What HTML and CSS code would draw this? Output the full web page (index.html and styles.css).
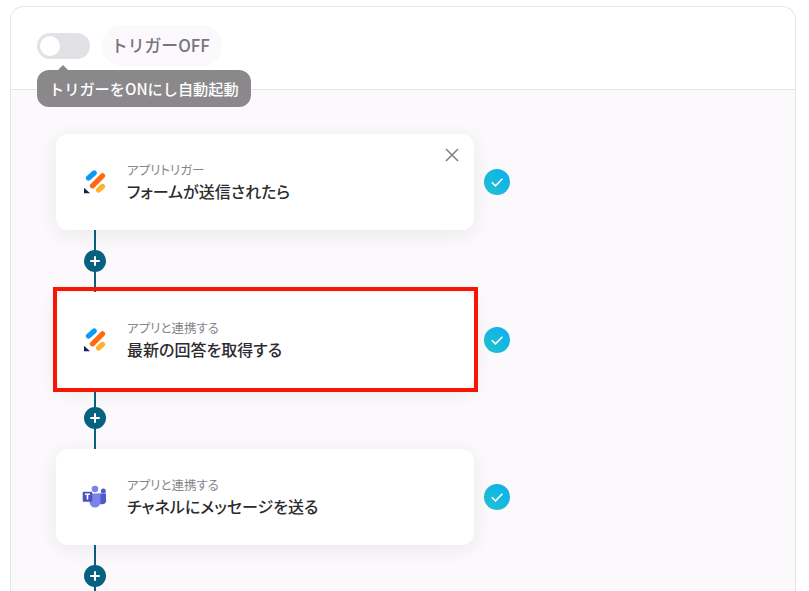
FILE: index.html
```html
<!DOCTYPE html>
<html lang="ja">

<head>
    <meta charset="utf-8">
    <title>フローボット</title>
    <link rel="stylesheet" href="styles.css">
</head>

<body>
    <svg class="defs" width="0" height="0">
        <symbol id="jotform" viewBox="0 0 24 24">
            <path class="jf-blue" d="M6.5 8 L12.2 3"/>
            <path class="jf-orange" d="M10.5 15.8 L20.5 5.8"/>
            <path class="jf-yellow" d="M16.5 20 L20.5 16.5"/>
            <path class="jf-dark" d="M2 17.7 V23.3 H8 Z"/>
        </symbol>
        <symbol id="check" viewBox="0 0 26 26">
            <path class="check-mark" d="M7.8 13.2 L11.5 16.8 L18.4 9.8"/>
        </symbol>
        <linearGradient id="check-bg" x1="0" y1="1" x2="1" y2="0">
            <stop offset="0" stop-color="#23c3cc"/>
            <stop offset="1" stop-color="#0aaef2"/>
        </linearGradient>
    </svg>

    <div class="panel">
        <div class="panel-head">
            <div class="toggle"><span class="knob"></span></div>
            <div class="status">トリガーOFF</div>
            <div class="tooltip">トリガーをONにし自動起動</div>
        </div>

        <div class="flow">
            <div class="step">
                <div class="card">
                    <svg class="app-icon" width="24" height="24"><use href="#jotform"/></svg>
                    <div class="card-text">
                        <div class="card-label">アプリトリガー</div>
                        <div class="card-title">フォームが送信されたら</div>
                    </div>
                    <svg class="close" width="16" height="16" viewBox="0 0 16 16"><path d="M2 2 L14 14 M14 2 L2 14"/></svg>
                </div>
                <svg class="check" width="26" height="26" viewBox="0 0 26 26"><circle cx="13" cy="13" r="13" fill="url(#check-bg)"/><use href="#check"/></svg>
            </div>
            <div class="connector"><span class="plus"></span></div>

            <div class="step">
                <div class="card">
                    <svg class="app-icon" width="24" height="24"><use href="#jotform"/></svg>
                    <div class="card-text">
                        <div class="card-label">アプリと連携する</div>
                        <div class="card-title">最新の回答を取得する</div>
                    </div>
                </div>
                <svg class="check" width="26" height="26" viewBox="0 0 26 26"><circle cx="13" cy="13" r="13" fill="url(#check-bg)"/><use href="#check"/></svg>
                <div class="highlight"></div>
            </div>
            <div class="connector"><span class="plus"></span></div>

            <div class="step">
                <div class="card">
                    <svg class="app-icon teams" width="26" height="26" viewBox="0 0 26 26">
                        <circle cx="13" cy="5" r="3.3" fill="#7b83eb"/>
                        <circle cx="21.3" cy="7" r="2.5" fill="#5059c9"/>
                        <path d="M16 9.5 H24 V15.5 A4 4 0 0 1 16 17 Z" fill="#5059c9"/>
                        <path d="M7.5 9.5 H18.5 V18 A5.5 5.5 0 0 1 7.5 18 Z" fill="#7b83eb"/>
                        <rect x="0.7" y="7.7" width="9.5" height="10" rx="1" fill="#4b53bc"/>
                        <path class="teams-t" d="M3 10.2 H8 M5.5 10.2 V15.4"/>
                    </svg>
                    <div class="card-text">
                        <div class="card-label">アプリと連携する</div>
                        <div class="card-title">チャネルにメッセージを送る</div>
                    </div>
                </div>
                <svg class="check" width="26" height="26" viewBox="0 0 26 26"><circle cx="13" cy="13" r="13" fill="url(#check-bg)"/><use href="#check"/></svg>
            </div>
            <div class="connector"><span class="plus"></span></div>
        </div>
    </div>
</body>

</html>
```

FILE: styles.css
```css
html, body {
    height: 100%;
}

body {
    margin: 0;
    overflow: hidden;
    background: #fff;
    color: #2b2b30;
    font-family: "Noto Sans CJK JP", "Noto Sans", sans-serif;
}

.defs {
    position: absolute;
}

.panel {
    margin: 6px 0 0 10px;
    width: 786px;
    height: 585px;
    box-sizing: border-box;
    overflow: hidden;
    border: 1px solid #e6e6e9;
    border-bottom: 0;
    border-radius: 14px 14px 0 0;
    background: #fbf9fb;
}

.panel-head {
    position: relative;
    display: flex;
    align-items: center;
    gap: 12px;
    height: 83px;
    box-sizing: border-box;
    padding: 0 0 5px 26px;
    background: #fff;
    border-bottom: 1px solid #e6e6e9;
}

.toggle {
    width: 53px;
    height: 26px;
    box-sizing: border-box;
    padding: 3px;
    border-radius: 13px;
    background: #e2e1e5;
}

.knob {
    display: block;
    width: 20px;
    height: 20px;
    border-radius: 50%;
    background: #fff;
}

.status {
    padding: 10px 12px 10px 9px;
    border-radius: 20px;
    background: #fbf9fb;
    color: #77767b;
    font-size: 16.8px;
    font-weight: 500;
    line-height: 21px;
}

.tooltip {
    position: absolute;
    left: 26px;
    top: 63px;
    padding: 0 12px;
    height: 37px;
    border-radius: 12px;
    background: #8a888b;
    color: #fff;
    font-size: 15.2px;
    font-weight: 500;
    line-height: 37px;
    white-space: nowrap;
}

.tooltip::before {
    content: "";
    position: absolute;
    left: 20px;
    top: -5px;
    border-left: 6px solid transparent;
    border-right: 6px solid transparent;
    border-bottom: 6px solid #8a888b;
}

.flow {
    padding: 44px 0 0 45px;
}

.step {
    position: relative;
    display: flex;
    align-items: center;
    gap: 10px;
}

.card {
    position: relative;
    display: flex;
    align-items: center;
    gap: 21px;
    width: 418px;
    height: 96px;
    box-sizing: border-box;
    padding: 0 0 0 26px;
    border-radius: 12px;
    background: #fff;
    box-shadow: 0 4px 20px rgba(40, 40, 60, 0.08);
}

.app-icon {
    flex: none;
}

.teams {
    margin-right: -2px;
}

.jf-blue, .jf-orange, .jf-yellow {
    fill: none;
    stroke-width: 5.2;
    stroke-linecap: round;
}

.jf-blue {
    stroke: #0a9cf5;
}

.jf-orange {
    stroke: #ff6a10;
}

.jf-yellow {
    stroke: #ffb02e;
}

.jf-dark {
    fill: #16214d;
}

.teams-t {
    fill: none;
    stroke: #fff;
    stroke-width: 1.6;
}

.card-label {
    color: #85858a;
    font-size: 12.5px;
    font-feature-settings: "palt";
    line-height: 16px;
}

.card-title {
    margin-top: 2px;
    font-size: 16px;
    font-feature-settings: "palt";
    font-weight: 500;
    line-height: 22px;
}

.close {
    position: absolute;
    right: 14px;
    top: 13px;
    fill: none;
    stroke: #808085;
    stroke-width: 1.5;
}

.check {
    flex: none;
}

.check-mark {
    fill: none;
    stroke: #fff;
    stroke-width: 1.6;
}

.highlight {
    position: absolute;
    left: -3px;
    top: -4.5px;
    width: 425px;
    height: 105px;
    box-sizing: border-box;
    border: 4px solid #fa1405;
}

.connector {
    display: flex;
    align-items: center;
    justify-content: center;
    width: 2px;
    height: 61.5px;
    margin-left: 38px;
    background: #0b5f82;
}

.plus {
    flex: none;
    position: relative;
    width: 22px;
    height: 22px;
    margin-left: -1px;
    border-radius: 50%;
    background: #07607f;
}

.plus::before, .plus::after {
    content: "";
    position: absolute;
    background: #fff;
    border-radius: 1px;
}

.plus::before {
    left: 6px;
    top: 10px;
    width: 10px;
    height: 2px;
}

.plus::after {
    left: 10px;
    top: 6px;
    width: 2px;
    height: 10px;
}
```
